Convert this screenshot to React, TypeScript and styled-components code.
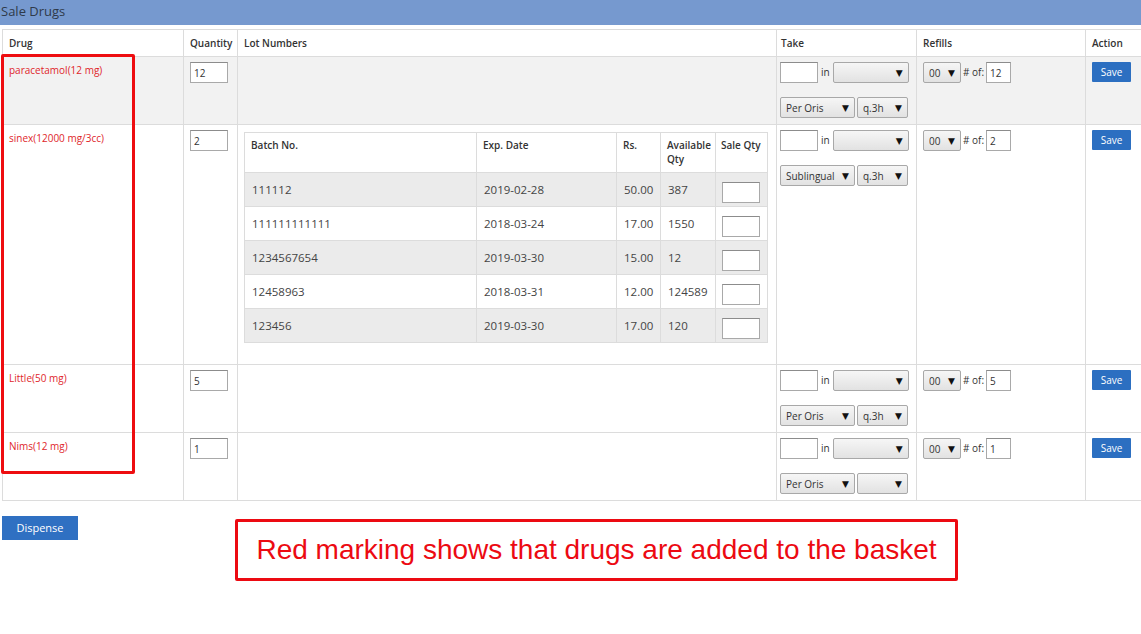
import React from "react";
import styled, { createGlobalStyle } from "styled-components";

const GlobalStyle = createGlobalStyle`
  body {
    margin: 0;
    background: #fff;
    font-family: "Open Sans", "DejaVu Sans", sans-serif;
    color: #333;
  }
`;

const Page = styled.div`
  width: 1141px;
`;

const TitleBar = styled.div`
  height: 25px;
  background: #7699cf;
  color: #2f3a4a;
  font-size: 13px;
  line-height: 23px;
  padding-left: 1px;
`;

const TableWrap = styled.div`
  position: relative;
  margin: 4px 0 0 2px;
`;

const Grid = styled.table`
  width: 1139px;
  table-layout: fixed;
  border-collapse: collapse;
  font-size: 10px;
`;

const HeadCell = styled.th<{ $pl?: number }>`
  border: 1px solid #dcdcdc;
  text-align: left;
  font-weight: 600;
  height: 26px;
  line-height: 12px;
  padding: 0 4px 0 ${({ $pl }) => $pl ?? 6}px;
  color: #333;
`;

const Row = styled.tr<{ $shade?: boolean }>`
  background: ${({ $shade }) => ($shade ? "#f2f2f2" : "#fff")};
`;

const Cell = styled.td<{ $pl?: number; $pt?: number }>`
  border: 1px solid #dcdcdc;
  vertical-align: top;
  padding: ${({ $pt }) => $pt ?? 5}px 4px 6px ${({ $pl }) => $pl ?? 6}px;
`;

const DrugName = styled.div`
  color: #e0262b;
  font-size: 10px;
  margin-top: 1px;
`;

const TextInput = styled.input<{ $w: number }>`
  box-sizing: border-box;
  width: ${({ $w }) => $w}px;
  height: 21px;
  border: 1px solid #a9a9a9;
  border-top-color: #8c8c8c;
  background: #fff;
  font: 10px "Open Sans", "DejaVu Sans", sans-serif;
  color: #333;
  padding: 0 3px;
  margin: 0;
`;

const SelectBox = styled.span<{ $w: number }>`
  position: relative;
  display: inline-block;
  width: ${({ $w }) => $w}px;
  height: 21px;

  &::after {
    content: "▼";
    position: absolute;
    right: 6px;
    top: 4px;
    font-size: 9px;
    color: #111;
    pointer-events: none;
  }
`;

const NativeSelect = styled.select`
  appearance: none;
  box-sizing: border-box;
  width: 100%;
  height: 21px;
  margin: 0;
  border: 1px solid #a8a8a8;
  border-radius: 2px;
  background: linear-gradient(#f6f6f6, #e2e2e2);
  font: 10px "Open Sans", "DejaVu Sans", sans-serif;
  color: #333;
  padding: 0 14px 0 5px;
`;

const TakeStack = styled.div`
  display: flex;
  flex-direction: column;
  gap: 14px;
`;

const Line = styled.div<{ $gap?: number }>`
  display: flex;
  align-items: center;
  gap: ${({ $gap }) => $gap ?? 2}px;
`;

const Label = styled.span`
  font-size: 10px;
  color: #333;
  padding-bottom: 2px;
`;

const SaveButton = styled.button`
  width: 39px;
  height: 20px;
  border: none;
  border-radius: 1px;
  background: #2c6fc1;
  color: #fff;
  font: 10px "Open Sans", "DejaVu Sans", sans-serif;
  padding: 0;
`;

const Lots = styled.table`
  width: 523px;
  table-layout: fixed;
  border-collapse: collapse;
  margin: 1px 0 15px 0;
`;

const LotHead = styled.th<{ $pl?: number }>`
  border: 1px solid #dcdcdc;
  text-align: left;
  vertical-align: top;
  font-weight: 600;
  font-size: 10px;
  line-height: 14px;
  height: 27px;
  padding: 5px 4px 6px ${({ $pl }) => $pl ?? 6}px;
  background: #fff;
`;

const LotRow = styled.tr<{ $shade: boolean }>`
  background: ${({ $shade }) => ($shade ? "#ebebeb" : "#fff")};
`;

const LotCell = styled.td`
  border: 1px solid #dcdcdc;
  font-size: 11.5px;
  height: 34px;
  padding: 0 6px 0 7px;
  vertical-align: middle;
  color: #444;
  box-sizing: border-box;
`;

const SaleCell = styled(LotCell)`
  padding-top: 6px;
  padding-left: 6px;
`;

const NoWrap = styled.span`
  white-space: nowrap;
`;

const Marker = styled.div`
  position: absolute;
  left: -1px;
  top: 25px;
  width: 134px;
  height: 420px;
  box-sizing: border-box;
  border: 3px solid #ee0d10;
  border-radius: 2px;
  pointer-events: none;
`;

const Footer = styled.div`
  display: flex;
  align-items: flex-start;
  padding: 15px 0 0 2px;
`;

const DispenseButton = styled.button`
  width: 76px;
  height: 24px;
  border: none;
  background: #2f70c2;
  color: #fff;
  font: 11px "Open Sans", "DejaVu Sans", sans-serif;
  padding: 0 0 2px;
`;

const Note = styled.div`
  margin: 3px 0 0 157px;
  width: 723px;
  height: 62px;
  box-sizing: border-box;
  border: 3px solid #ec0a12;
  border-radius: 2px;
  display: flex;
  align-items: center;
  justify-content: center;
  color: #ec0a12;
  font: 28px "Liberation Sans", Arial, sans-serif;
`;

type Lot = { batch: string; exp: string; rs: string; qty: string };

type Drug = {
  name: string;
  quantity: string;
  route: string;
  freq: string;
  refills: string;
  shade?: boolean;
  lots?: Lot[];
};

const drugs: Drug[] = [
  { name: "paracetamol(12 mg)", quantity: "12", route: "Per Oris", freq: "q.3h", refills: "12", shade: true },
  {
    name: "sinex(12000 mg/3cc)",
    quantity: "2",
    route: "Sublingual",
    freq: "q.3h",
    refills: "2",
    lots: [
      { batch: "111112", exp: "2019-02-28", rs: "50.00", qty: "387" },
      { batch: "111111111111", exp: "2018-03-24", rs: "17.00", qty: "1550" },
      { batch: "1234567654", exp: "2019-03-30", rs: "15.00", qty: "12" },
      { batch: "12458963", exp: "2018-03-31", rs: "12.00", qty: "124589" },
      { batch: "123456", exp: "2019-03-30", rs: "17.00", qty: "120" },
    ],
  },
  { name: "Little(50 mg)", quantity: "5", route: "Per Oris", freq: "q.3h", refills: "5" },
  { name: "Nims(12 mg)", quantity: "1", route: "Per Oris", freq: "", refills: "1" },
];

const Select: React.FC<{ w: number; value: string }> = ({ w, value }) => (
  <SelectBox $w={w}>
    <NativeSelect defaultValue={value}>
      <option value={value}>{value}</option>
    </NativeSelect>
  </SelectBox>
);

const LotTable: React.FC<{ lots: Lot[] }> = ({ lots }) => (
  <Lots>
    <colgroup>
      <col style={{ width: 232 }} />
      <col style={{ width: 140 }} />
      <col style={{ width: 44 }} />
      <col style={{ width: 55 }} />
      <col style={{ width: 52 }} />
    </colgroup>
    <thead>
      <tr>
        <LotHead>Batch No.</LotHead>
        <LotHead>Exp. Date</LotHead>
        <LotHead>Rs.</LotHead>
        <LotHead>Available Qty</LotHead>
        <LotHead $pl={5}>
          <NoWrap>Sale Qty</NoWrap>
        </LotHead>
      </tr>
    </thead>
    <tbody>
      {lots.map((lot, i) => (
        <LotRow key={lot.batch} $shade={i % 2 === 0}>
          <LotCell>{lot.batch}</LotCell>
          <LotCell>{lot.exp}</LotCell>
          <LotCell>{lot.rs}</LotCell>
          <LotCell>{lot.qty}</LotCell>
          <SaleCell>
            <TextInput $w={38} />
          </SaleCell>
        </LotRow>
      ))}
    </tbody>
  </Lots>
);

const App: React.FC = () => {
  return (
    <Page>
      <GlobalStyle />
      <TitleBar>Sale Drugs</TitleBar>
      <TableWrap>
        <Grid>
          <colgroup>
            <col style={{ width: 181 }} />
            <col style={{ width: 54 }} />
            <col style={{ width: 539 }} />
            <col style={{ width: 140 }} />
            <col style={{ width: 169 }} />
            <col style={{ width: 56 }} />
          </colgroup>
          <thead>
            <tr>
              <HeadCell>Drug</HeadCell>
              <HeadCell>Quantity</HeadCell>
              <HeadCell>Lot Numbers</HeadCell>
              <HeadCell $pl={4}>Take</HeadCell>
              <HeadCell>Refills</HeadCell>
              <HeadCell>Action</HeadCell>
            </tr>
          </thead>
          <tbody>
            {drugs.map((drug) => (
              <Row key={drug.name} $shade={drug.shade}>
                <Cell>
                  <DrugName>{drug.name}</DrugName>
                </Cell>
                <Cell>
                  <TextInput $w={38} defaultValue={drug.quantity} />
                </Cell>
                <Cell $pt={drug.lots ? 6 : 5}>{drug.lots && <LotTable lots={drug.lots} />}</Cell>
                <Cell $pl={3}>
                  <TakeStack>
                    <Line $gap={3}>
                      <TextInput $w={38} />
                      <Label>in</Label>
                      <Select w={76} value="" />
                    </Line>
                    <Line>
                      <Select w={75} value={drug.route} />
                      <Select w={51} value={drug.freq} />
                    </Line>
                  </TakeStack>
                </Cell>
                <Cell>
                  <Line>
                    <Select w={38} value="00" />
                    <Label># of:</Label>
                    <TextInput $w={25} defaultValue={drug.refills} />
                  </Line>
                </Cell>
                <Cell>
                  <SaveButton>Save</SaveButton>
                </Cell>
              </Row>
            ))}
          </tbody>
        </Grid>
        <Marker />
      </TableWrap>
      <Footer>
        <DispenseButton>Dispense</DispenseButton>
        <Note>Red marking shows that drugs are added to the basket</Note>
      </Footer>
    </Page>
  );
};

export default App;
